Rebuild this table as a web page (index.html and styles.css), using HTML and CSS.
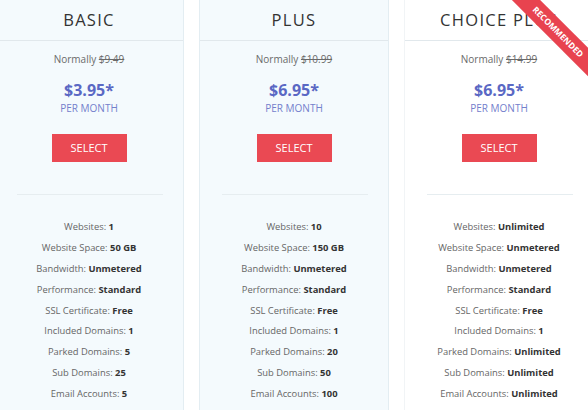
FILE: index.html
```html
<!DOCTYPE html>
<html>
<head>
<meta charset="utf-8">
<link rel="stylesheet" href="styles.css">
</head>
<body>
<div class="row">
  <div class="plan tinted">
    <div class="head">BASIC</div>
    <div class="normally">Normally <s>$9.49</s></div>
    <div class="price">$3.95*</div>
    <div class="per">PER MONTH</div>
    <div class="btnwrap"><a class="btn">SELECT</a></div>
    <div class="sep"></div>
    <ul class="feats">
      <li>Websites: <b>1</b></li>
      <li>Website Space: <b>50 GB</b></li>
      <li>Bandwidth: <b>Unmetered</b></li>
      <li>Performance: <b>Standard</b></li>
      <li>SSL Certificate: <b>Free</b></li>
      <li>Included Domains: <b>1</b></li>
      <li>Parked Domains: <b>5</b></li>
      <li>Sub Domains: <b>25</b></li>
      <li>Email Accounts: <b>5</b></li>
    </ul>
  </div>
  <div class="plan tinted">
    <div class="head">PLUS</div>
    <div class="normally">Normally <s>$10.99</s></div>
    <div class="price">$6.95*</div>
    <div class="per">PER MONTH</div>
    <div class="btnwrap"><a class="btn">SELECT</a></div>
    <div class="sep"></div>
    <ul class="feats">
      <li>Websites: <b>10</b></li>
      <li>Website Space: <b>150 GB</b></li>
      <li>Bandwidth: <b>Unmetered</b></li>
      <li>Performance: <b>Standard</b></li>
      <li>SSL Certificate: <b>Free</b></li>
      <li>Included Domains: <b>1</b></li>
      <li>Parked Domains: <b>20</b></li>
      <li>Sub Domains: <b>50</b></li>
      <li>Email Accounts: <b>100</b></li>
    </ul>
  </div>
  <div class="plan white">
    <div class="ribbon"><span>RECOMMENDED</span></div>
    <div class="head">CHOICE PLUS</div>
    <div class="normally">Normally <s>$14.99</s></div>
    <div class="price">$6.95*</div>
    <div class="per">PER MONTH</div>
    <div class="btnwrap"><a class="btn">SELECT</a></div>
    <div class="sep"></div>
    <ul class="feats">
      <li>Websites: <b>Unlimited</b></li>
      <li>Website Space: <b>Unmetered</b></li>
      <li>Bandwidth: <b>Unmetered</b></li>
      <li>Performance: <b>Standard</b></li>
      <li>SSL Certificate: <b>Free</b></li>
      <li>Included Domains: <b>1</b></li>
      <li>Parked Domains: <b>Unlimited</b></li>
      <li>Sub Domains: <b>Unlimited</b></li>
      <li>Email Accounts: <b>Unlimited</b></li>
    </ul>
  </div>
</div>
</body>
</html>
```

FILE: styles.css
```css
html, body {
  margin: 0;
  padding: 0;
  background: #ffffff;
  overflow: hidden;
  width: 588px;
  height: 410px;
  font-family: "Open Sans", "Liberation Sans", sans-serif;
}
.row {
  display: flex;
  gap: 15px;
  margin-left: -6px;
  width: 600px;
}
.plan {
  position: relative;
  width: 190px;
  flex: 0 0 190px;
  box-sizing: border-box;
  height: 430px;
  border-left: 1px solid #e3edf2;
  border-right: 1px solid #e3edf2;
  overflow: hidden;
  text-align: center;
}
.tinted { background: #f4fafd; }
.white { background: #ffffff; border-color: #f1f4f6; }
.head {
  height: 40px;
  line-height: 40px;
  border-bottom: 1px solid #e1e8ec;
  font-size: 16.5px;
  letter-spacing: 1.3px;
  color: #333;
}
.normally {
  margin-top: 11px;
  font-size: 10px;
  line-height: 14px;
  color: #6a6a6a;
}
.normally s { color: #6a6a6a; }
.price {
  margin-top: 13px;
  font-size: 16px;
  line-height: 22px;
  font-weight: 700;
  color: #5a68c4;
}
.per {
  font-size: 10px;
  line-height: 14px;
  color: #7380cc;
}
.btnwrap {
  margin-top: 19px;
  display: flex;
  justify-content: center;
}
.btn {
  display: block;
  width: 75px;
  height: 28px;
  line-height: 28px;
  background: #ea4953;
  color: #fff;
  font-size: 11px;
}
.sep {
  margin: 32px 20px 0 22px;
  height: 1px;
  background: #e6edf0;
}
.feats {
  list-style: none;
  margin: 25px 0 0;
  padding: 0;
  font-size: 9.4px;
  color: #666;
}
.feats li {
  height: 20.9px;
  line-height: 14px;
}
.feats b { color: #333; font-weight: 700; }
.ribbon {
  position: absolute;
  top: 0;
  right: 0;
  width: 100px;
  height: 100px;
  overflow: hidden;
}
.ribbon span {
  position: absolute;
  left: -10px;
  top: 22px;
  width: 150px;
  height: 20px;
  line-height: 20px;
  background: #e8434f;
  color: #fff;
  font-size: 8.5px;
  font-weight: 700;
  text-align: center;
  transform: rotate(45deg);
}
```
